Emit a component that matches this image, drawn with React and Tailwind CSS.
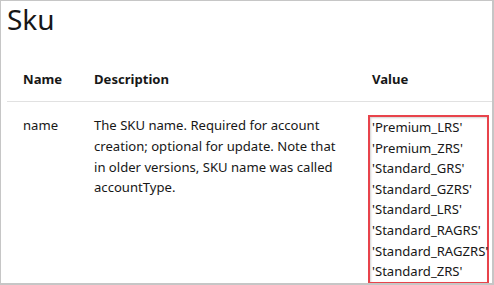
import React from 'react';

const skus = [
    'Premium_LRS',
    'Premium_ZRS',
    'Standard_GRS',
    'Standard_GZRS',
    'Standard_LRS',
    'Standard_RAGRS',
    'Standard_RAGZRS',
    'Standard_ZRS',
];

export default function App() {
    return (
        <div
            className="w-[494px] h-[285px] overflow-hidden bg-white text-[#171717] border-l border-t border-r-2 border-b-2 border-[#c6c6c6]"
            style={{ fontFamily: '"Segoe UI", "Noto Sans", sans-serif' }}
        >
            <h1 className="pl-[6px] pt-[4px] text-[28px] leading-[28px] font-normal">Sku</h1>

            {/* Properties table */}
            <div className="ml-[6px] mt-[36px] text-[13.1px]">
                <div className="grid grid-cols-[71px_278px_1fr] border-b border-[#e1e1e1] pb-[11px] leading-[21px] font-bold">
                    <div className="pl-4">Name</div>
                    <div className="pl-4">Description</div>
                    <div className="pl-4">Value</div>
                </div>

                <div className="grid grid-cols-[71px_278px_1fr] pt-[13px]">
                    <div className="pl-4 leading-[20.8px]">name</div>
                    <div className="pl-4 leading-[20.8px] whitespace-nowrap">
                        The SKU name. Required for account<br />
                        creation; optional for update. Note that<br />
                        in older versions, SKU name was called<br />
                        accountType.
                    </div>
                    <div className="pl-3">
                        <div className="w-[121px] border-2 border-[#e8434b] pl-[2px] leading-[20.6px] whitespace-nowrap shadow-[inset_1px_1px_2px_rgba(0,0,0,0.18)]">
                            {skus.map(s => (
                                <div key={s}>'{s}'</div>
                            ))}
                        </div>
                    </div>
                </div>
            </div>
        </div>
    );
}
